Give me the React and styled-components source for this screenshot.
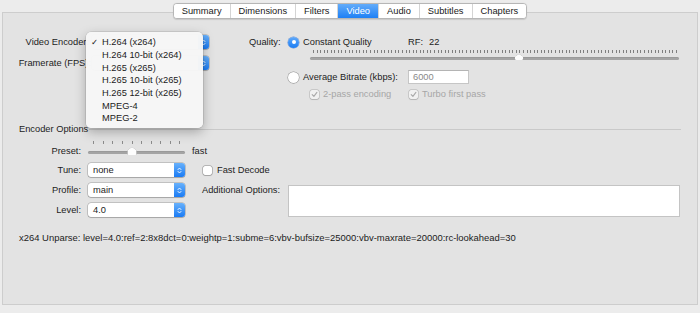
import React from 'react';
import styled, { createGlobalStyle } from 'styled-components';

const GlobalStyle = createGlobalStyle`
  html, body {
    margin: 0;
    padding: 0;
    background: #ececec;
  }
  body {
    font-family: "Liberation Sans", Arial, sans-serif;
    font-size: 9.3px;
    color: #1c1c1c;
  }
`;

const Window = styled.div`
  width: 700px;
  height: 313px;
  box-sizing: border-box;
  padding-top: 3px;
  background: #ececec;
  overflow: hidden;
`;

const TabBar = styled.div`
  position: relative;
  z-index: 2;
  display: flex;
  justify-content: center;
  height: 16px;
`;

const Tabs = styled.div`
  display: flex;
  border: 1px solid #b6b6b6;
  border-radius: 4px;
  background: #fff;
  overflow: hidden;
  box-shadow: 0 0.5px 1px rgba(0, 0, 0, .12);
`;

const Tab = styled.div`
  padding: 0 8px;
  line-height: 14px;
  border-left: 1px solid #d4d4d4;
  background: ${p => p.$active ? 'linear-gradient(#63acfa, #1e80f5)' : '#fff'};
  color: ${p => p.$active ? '#fff' : '#1a1a1a'};
  &:first-child {
    border-left: none;
  }
`;

const Panel = styled.div`
  position: relative;
  margin: -7px 2px 0;
  height: 293px;
  box-sizing: border-box;
  padding-top: 22px;
  border: 1px solid #cdcdcd;
  background: #e3e3e3;
`;

const TopSection = styled.div`
  display: flex;
  align-items: flex-start;
`;

const LeftGrid = styled.div`
  display: grid;
  grid-template-columns: 89px 117px;
  grid-auto-rows: 14px;
  row-gap: 7px;
  align-items: center;
`;

const Label = styled.span`
  text-align: ${p => p.$align || 'right'};
  padding-right: ${p => p.$pr || 0}px;
  white-space: nowrap;
  line-height: 12px;
  align-self: ${p => p.$self || 'center'};
`;

const RightGrid = styled.div`
  margin-left: 40px;
  display: grid;
  grid-template-columns: 39px 22px 98px 271px;
  grid-template-rows: 14px 21px 14px 20px;
  align-items: center;
`;

const Option = styled.div`
  display: flex;
  align-items: center;
  gap: ${p => p.$gap || 4}px;
  grid-column: ${p => p.$col || 'auto'};
  padding-left: ${p => p.$pl || 0}px;
  color: ${p => p.$disabled ? '#a6a6a6' : 'inherit'};
  white-space: nowrap;
  line-height: 12px;
  align-self: ${p => p.$self || 'center'};
`;

const Radio = styled.span`
  width: 11px;
  height: 11px;
  box-sizing: border-box;
  border-radius: 50%;
  flex: none;
  display: flex;
  align-items: center;
  justify-content: center;
  background: ${p => p.$on ? 'linear-gradient(#5fa9fa, #1b7df4)' : '#fff'};
  box-shadow: ${p => p.$on
    ? '0 0 0 0.5px rgba(20, 90, 200, .6)'
    : '0 0 0 0.5px rgba(0, 0, 0, .35), 0 0.5px 1px rgba(0, 0, 0, .15)'};
  &::after {
    content: '';
    display: ${p => p.$on ? 'block' : 'none'};
    width: 4px;
    height: 4px;
    border-radius: 50%;
    background: #fff;
  }
`;

const Box = styled.span`
  width: 9px;
  height: 9px;
  box-sizing: border-box;
  flex: none;
  border-radius: 2px;
  background: ${p => p.$disabled ? '#f1f1f1' : '#fff'};
  box-shadow: 0 0 0 0.5px ${p => p.$disabled ? 'rgba(0,0,0,.22)' : 'rgba(0,0,0,.38)'}, 0 0.5px 1px rgba(0, 0, 0, .1);
  display: flex;
  align-items: center;
  justify-content: center;
`;

const RfValue = styled.div`
  display: flex;
  gap: 6px;
  color: #222;
`;

const Field = styled.div`
  width: 61px;
  height: 14px;
  box-sizing: border-box;
  padding-left: 4px;
  line-height: 13px;
  background: #fff;
  border: 1px solid #c6c6c6;
  border-top-color: #b4b4b4;
  color: #8a8a8a;
`;

const SliderWrap = styled.div`
  position: relative;
  display: flex;
  flex-direction: column;
  width: ${p => p.$w}px;
  height: ${p => p.$h}px;
  grid-column: ${p => p.$col || 'auto'};
  justify-self: ${p => p.$justify || 'start'};
  align-self: start;
  padding-top: ${p => p.$pt || 0}px;
  box-sizing: border-box;
`;

const Track = styled.div`
  margin-top: ${p => p.$mt}px;
  height: ${p => p.$th}px;
  border-radius: 2px;
  background: #a4a4a4;
  box-shadow: inset 0 0.5px 0 rgba(0, 0, 0, .12);
`;

const Knob = styled.svg`
  position: absolute;
  top: ${p => p.$top}px;
  transform: translateX(-50%);
  overflow: visible;
  filter: drop-shadow(0 0.5px 0.6px rgba(0, 0, 0, .45));
`;

const SectionHead = styled.div`
  display: flex;
  align-items: center;
  margin: 19px 16px 0 16px;
  line-height: 12px;
  &::after {
    content: '';
    flex: 1;
    height: 1px;
    margin-left: 1px;
    background: #c9c9c9;
  }
`;

const OptionsGrid = styled.div`
  margin-top: 6px;
  display: grid;
  grid-template-columns: 78px 104px 103px 392px;
  grid-template-rows: 16px 14px 14px 14px;
  row-gap: 6px;
  align-items: center;
`;

const PopupBox = styled.div`
  position: relative;
  display: flex;
  align-items: center;
  width: ${p => p.$w}px;
  height: 14px;
  box-sizing: border-box;
  padding-left: 5px;
  background: #fff;
  border-radius: 3px;
  box-shadow: 0 0 0 0.5px rgba(0, 0, 0, .3), 0 1px 1px rgba(0, 0, 0, .14);
  justify-self: ${p => p.$justify || 'start'};
`;

const PopupValue = styled.span`
  flex: 1;
  line-height: 12px;
`;

const Stepper = styled.span`
  width: 11px;
  height: 14px;
  border-radius: 0 3px 3px 0;
  background: linear-gradient(#68b1fb, #1a7bf4);
  display: flex;
  align-items: center;
  justify-content: center;
`;

const Menu = styled.div`
  position: absolute;
  left: -6px;
  top: -3px;
  z-index: 10;
  width: 117px;
  box-sizing: border-box;
  padding: 4px 0 3px;
  border-radius: 5px;
  background: rgba(246, 246, 246, .98);
  box-shadow: 0 0 0 0.5px rgba(0, 0, 0, .16), 0 4px 12px rgba(0, 0, 0, .28);
`;

const MenuItem = styled.div`
  display: flex;
  align-items: center;
  height: 12.7px;
  padding-left: 5px;
  color: #1b1b1b;
  white-space: nowrap;
`;

const Check = styled.span`
  width: 11px;
  font-family: "DejaVu Sans", sans-serif;
  font-size: 8.5px;
`;

const TextArea = styled.div`
  grid-row: 3 / span 2;
  grid-column: 4;
  align-self: start;
  margin-top: 2px;
  height: 32px;
  background: #fff;
  border: 1px solid #c4c4c4;
  box-sizing: border-box;
`;

const Unparse = styled.div`
  margin: 15px 0 0 16px;
  font-size: 9.45px;
  line-height: 12px;
  white-space: nowrap;
`;

const StepperIcon = () => (
  <svg width="5" height="9" viewBox="0 0 5 9">
    <path d="M1 3.6 L2.5 2 L4 3.6 M1 5.4 L2.5 7 L4 5.4" fill="none" stroke="#fff" strokeWidth="0.9" strokeLinecap="round" strokeLinejoin="round" />
  </svg>
);

// value is left empty for popups that sit under the open menu
const Popup = ({ value, width, justify, children }) => (
  <PopupBox $w={width} $justify={justify}>
    <PopupValue>{value}</PopupValue>
    <Stepper><StepperIcon /></Stepper>
    {children}
  </PopupBox>
);

const CheckMark = ({ color }) => (
  <svg width="7" height="7" viewBox="0 0 7 7">
    <path d="M1.2 3.7 L2.9 5.4 L5.9 1.4" fill="none" stroke={color} strokeWidth="1.1" strokeLinecap="round" strokeLinejoin="round" />
  </svg>
);

const CheckBox = ({ checked, disabled }) => (
  <Box $disabled={disabled}>
    {checked && <CheckMark color={disabled ? '#a9a9a9' : '#333'} />}
  </Box>
);

const Slider = ({ width, height, col, justify, tickCount, tickStart, tickEnd, tickTop, tickH, trackTop, trackH, frac, knobW, knobH, knobTop, tickColor }) => {
  const step = (tickEnd - tickStart) / (tickCount - 1);
  const ticks = Array.from({ length: tickCount }, (_, i) => tickStart + i * step);
  const knobX = tickStart + frac * (tickEnd - tickStart);
  return (
    <SliderWrap $w={width} $h={height} $col={col} $justify={justify} $pt={tickTop}>
      <svg width={width} height={tickH} style={{ display: 'block' }}>
        {ticks.map((x, i) => (
          <rect key={i} x={Math.round(x)} y="0" width="1" height={tickH} fill={tickColor} />
        ))}
      </svg>
      <Track $mt={trackTop} $th={trackH} />
      <Knob width={knobW} height={knobH} $top={knobTop} style={{ left: knobX }} viewBox={`0 0 ${knobW} ${knobH}`}>
        <path d={`M${knobW / 2} 0 L${knobW} ${knobH * 0.4} L${knobW} ${knobH - 1} Q${knobW} ${knobH} ${knobW - 1} ${knobH} L1 ${knobH} Q0 ${knobH} 0 ${knobH - 1} L0 ${knobH * 0.4} Z`} fill="#fdfdfd" />
      </Knob>
    </SliderWrap>
  );
};

const encoders = [
  'H.264 (x264)',
  'H.264 10-bit (x264)',
  'H.265 (x265)',
  'H.265 10-bit (x265)',
  'H.265 12-bit (x265)',
  'MPEG-4',
  'MPEG-2',
];

const tabs = ['Summary', 'Dimensions', 'Filters', 'Video', 'Audio', 'Subtitles', 'Chapters'];

export default function App() {
  return (
    <Window>
      <GlobalStyle />
      <TabBar>
        <Tabs>
          {tabs.map(t => <Tab key={t} $active={t === 'Video'}>{t}</Tab>)}
        </Tabs>
      </TabBar>
      <Panel>
        <TopSection>
          <LeftGrid>
            <Label $pr={3}>Video Encoder:</Label>
            <Popup value="" width={117}>
              <Menu>
                {encoders.map((e, i) => (
                  <MenuItem key={e}>
                    <Check>{i === 0 ? '✓' : ''}</Check>
                    {e}
                  </MenuItem>
                ))}
              </Menu>
            </Popup>
            <Label $pr={1}>Framerate (FPS):</Label>
            <Popup value="" width={117} />
          </LeftGrid>

          <RightGrid>
            <Label $align="left">Quality:</Label>
            <Option $col="2 / span 2">
              <Radio $on />
              Constant Quality
            </Option>
            <RfValue>
              <span>RF:</span>
              <span>22</span>
            </RfValue>

            <Slider
              width={369} height={11} col="3 / span 2"
              tickCount={103} tickStart={3} tickEnd={366} tickTop={1} tickH={3} tickColor="#7f7f7f"
              trackTop={3.5} trackH={3}
              frac={(51 - 22) / 51} knobW={8} knobH={6} knobTop={4.7}
            />

            <Option $col="2 / span 2">
              <Radio />
              Average Bitrate (kbps):
            </Option>
            <Field>6000</Field>

            <Option $col="3" $disabled>
              <CheckBox checked disabled />
              2-pass encoding
            </Option>
            <Option $col="4" $disabled $pl={1}>
              <CheckBox checked disabled />
              Turbo first pass
            </Option>
          </RightGrid>
        </TopSection>

        <SectionHead>Encoder Options</SectionHead>

        <OptionsGrid>
          <Label $self="end">Preset:</Label>
          <Slider
            width={97} height={16} justify="end"
            tickCount={10} tickStart={5.3} tickEnd={91.3} tickTop={0} tickH={3} tickColor="#8c8c8c"
            trackTop={7} trackH={2.5}
            frac={4 / 9} knobW={9} knobH={8} knobTop={6}
          />
          <Option $self="end" $pl={7}>fast</Option>
          <span />

          <Label>Tune:</Label>
          <Popup value="none" width={97} justify="end" />
          <Option $pl={18} $gap={5}>
            <CheckBox />
            Fast Decode
          </Option>
          <span />

          <Label>Profile:</Label>
          <Popup value="main" width={97} justify="end" />
          <Option $pl={17}>Additional Options:</Option>
          <TextArea />

          <Label>Level:</Label>
          <Popup value="4.0" width={97} justify="end" />
        </OptionsGrid>

        <Unparse>
          x264 Unparse: level=4.0:ref=2:8x8dct=0:weightp=1:subme=6:vbv-bufsize=25000:vbv-maxrate=20000:rc-lookahead=30
        </Unparse>
      </Panel>
    </Window>
  );
}
